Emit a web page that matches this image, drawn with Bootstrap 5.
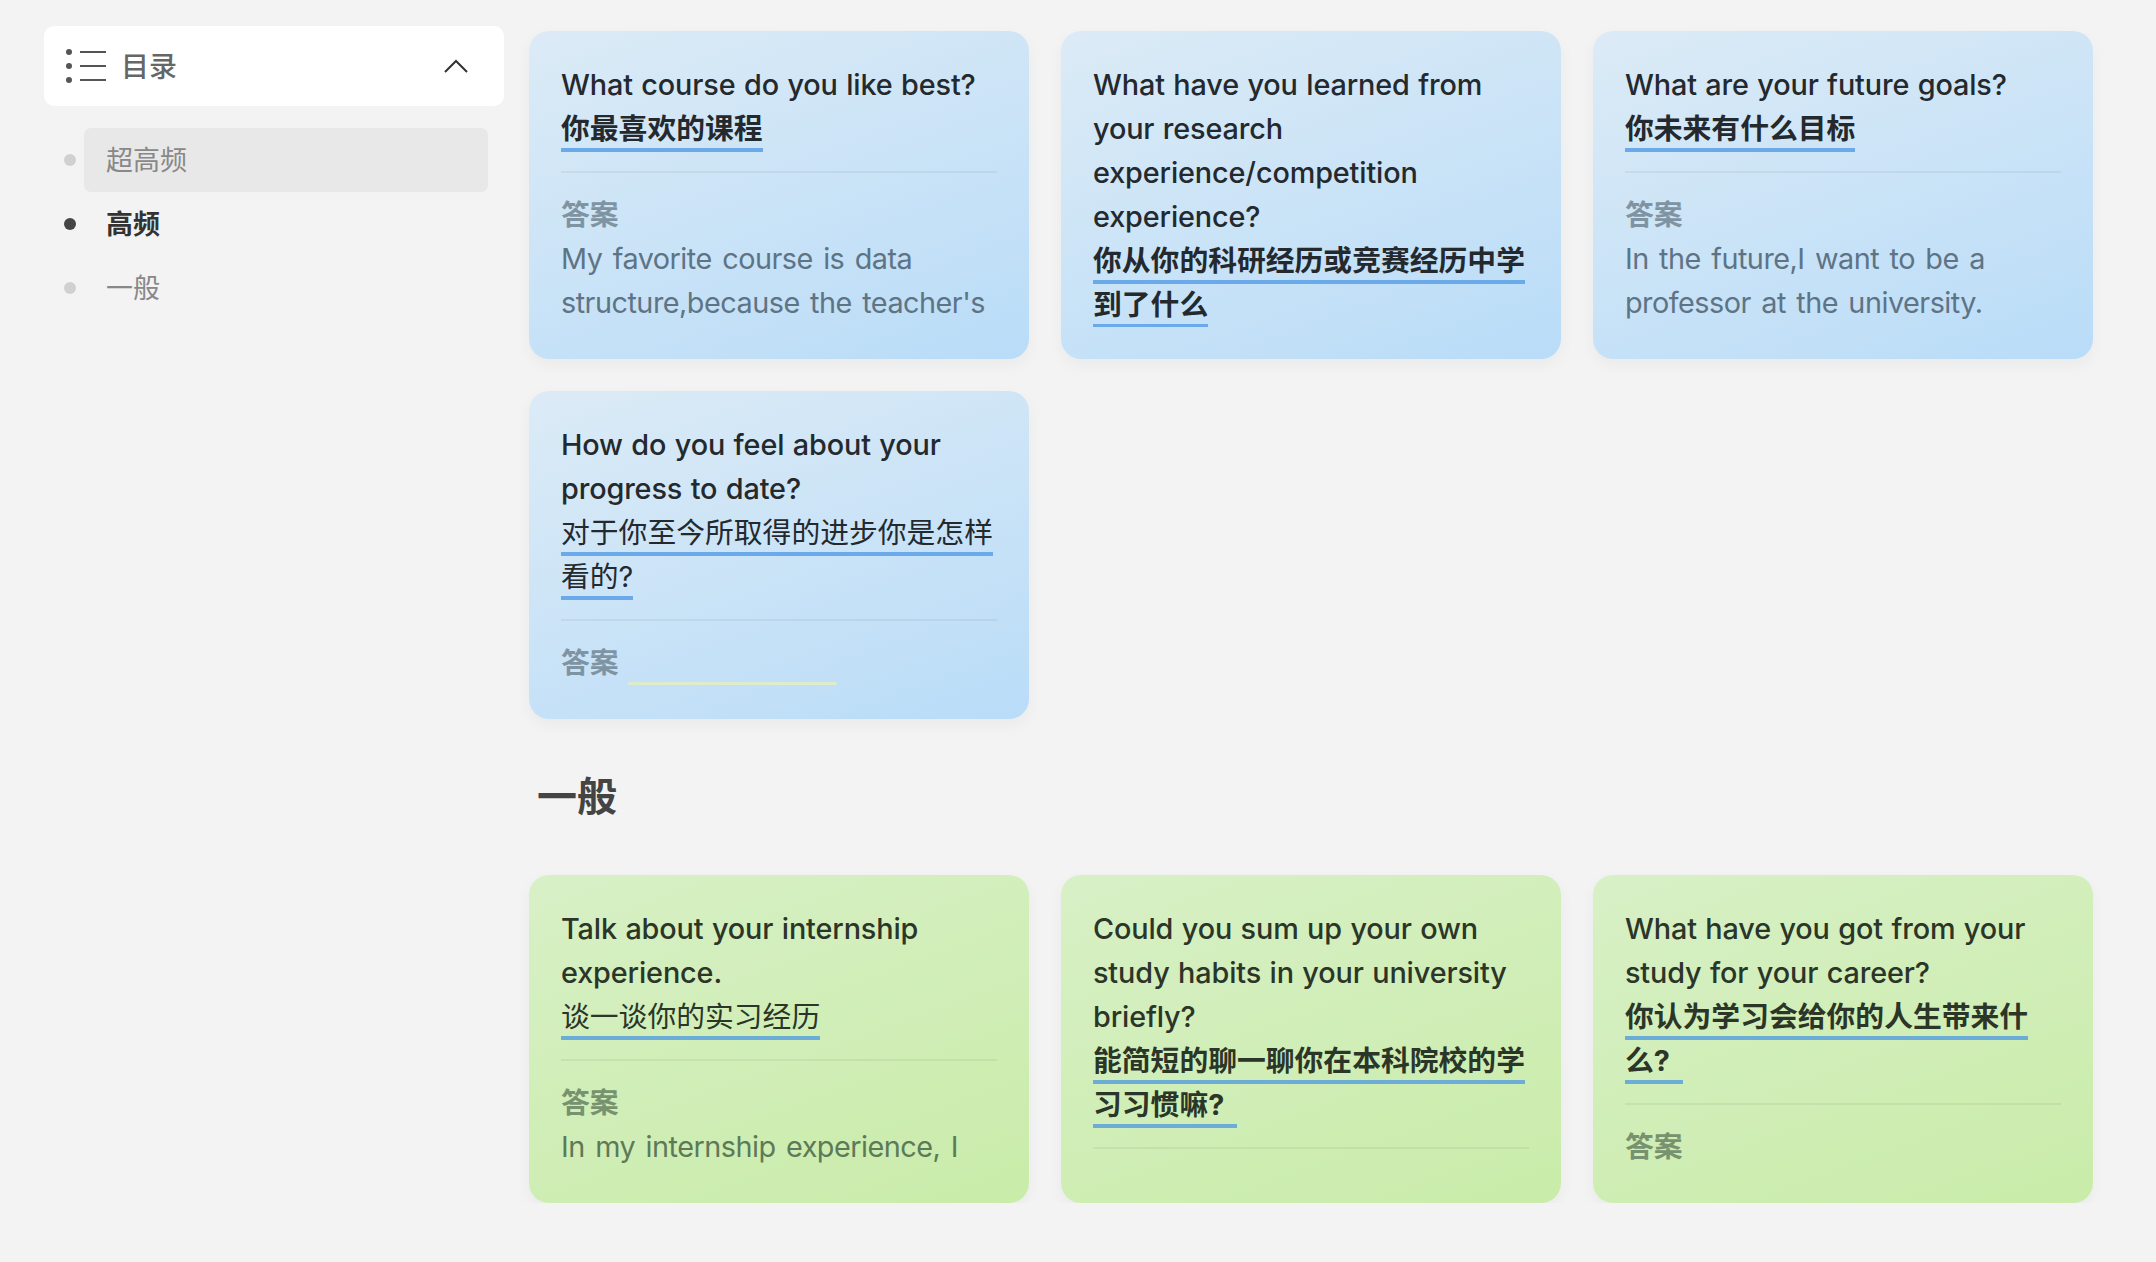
<!DOCTYPE html>
<html lang="zh-CN">
<head>
	<meta charset="UTF-8" />
	<meta name="viewport" content="width=device-width, initial-scale=1.0" />
	<title>目录</title>
	<link href="https://cdn.jsdelivr.net/npm/bootstrap@5.3.3/dist/css/bootstrap.min.css" rel="stylesheet" />
	<style>
		body {
			background-color: #f3f3f3;
			font-family: Inter, "Noto Sans CJK SC", sans-serif;
			overflow: hidden;
		}

		.page-wrap {
			padding-left: 44px;
		}

		.side-col {
			width: 460px;
			padding-top: 26px;
			flex: none;
		}

		.toc-head {
			height: 80px;
			padding: 0 36px 0 22px;
			border-radius: 10px;
			color: #666;
			font-size: 28px;
			font-weight: 500;
		}

		.toc-head-text {
			margin-left: 13px;
			padding-top: 2px;
		}

		.toc-list {
			margin-top: 22px;
		}

		.toc-item {
			height: 64px;
			padding-left: 20px;
			font-size: 27px;
			color: #888;
		}

		.toc-dot {
			width: 12px;
			height: 12px;
			border-radius: 50%;
			background-color: #d0d0d0;
			flex: none;
		}

		.toc-label {
			width: 404px;
			height: 64px;
			margin-left: 8px;
			padding: 2px 0 0 22px;
			border-radius: 7px;
		}

		.toc-item.is-hover .toc-label {
			background-color: #e8e8e8;
		}

		.toc-item.is-current {
			color: #333;
			font-weight: 700;
		}

		.toc-item.is-current .toc-dot {
			background-color: #444;
		}

		.main-col {
			width: 1564px;
			margin-left: 25px;
			padding-top: 31px;
		}

		.q-row {
			--bs-gutter-x: 32px;
			--bs-gutter-y: 32px;
		}

		.q-card {
			height: 328px;
			padding: 32px;
			border-radius: 20px;
			box-shadow: 0 6px 16px rgba(0, 0, 0, .04);
			font-size: 28.8px;
			line-height: 44px;
		}

		.q-inner {
			height: 264px;
			overflow: hidden;
		}

		.q-blue {
			background: linear-gradient(160deg, #dcebf6, #b9dcf8);
			color: #24292e;
		}

		.q-green {
			background: linear-gradient(160deg, #d8f0c6, #c9eca9);
			color: #2b3528;
		}

		.q-en {
			font-weight: 500;
			letter-spacing: -.12px;
			word-spacing: .9px;
		}

		.q-cn {
			padding-bottom: 2px;
			border-bottom: 4px solid #6aaaea;
			font-weight: 400;
		}

		.q-green .q-cn {
			border-bottom-color: #6cadd8;
		}

		.q-cn.is-bold {
			font-weight: 700;
		}

		.q-tail {
			padding-right: 13px;
		}

		.q-line {
			height: 2px;
			margin: 20px 0;
			background-color: rgba(0, 0, 0, .05);
			opacity: 1;
			border: 0;
		}

		.q-tag {
			font-weight: 700;
			color: #7f94a3;
		}

		.q-green .q-tag {
			color: #76926f;
		}

		.q-text {
			color: #5e7485;
			letter-spacing: -.5px;
			word-spacing: 2.8px;
		}

		.q-green .q-text {
			color: #5d7a58;
		}

		.q-blank {
			display: inline-block;
			width: 209px;
			height: 3px;
			margin-left: 9px;
			border-radius: 2px;
			vertical-align: -12px;
			background-color: #dfeccc;
		}

		.sec-title {
			height: 60px;
			margin: 48px 0;
			padding-left: 8px;
			font-size: 40px;
			line-height: 60px;
			font-weight: 700;
			color: #444;
		}
	</style>
</head>
<body>

	<div class="page-wrap d-flex">

		<div class="side-col">
			<div class="toc-head bg-white d-flex align-items-center">
				<svg width="42" height="36" viewBox="0 0 42 36" fill="none">
					<circle cx="3" cy="4" r="3" fill="#555" />
					<circle cx="3" cy="18" r="3" fill="#555" />
					<circle cx="3" cy="32" r="3" fill="#555" />
					<path d="M14 4H40M14 18H40M14 32H40" stroke="#555" stroke-width="2" />
				</svg>
				<span class="toc-head-text">目录</span>
				<svg class="ms-auto" width="24" height="14" viewBox="0 0 24 14" fill="none">
					<path d="M1 13L12 2L23 13" stroke="#333" stroke-width="2" />
				</svg>
			</div>
			<ul class="toc-list list-unstyled">
				<li class="toc-item is-hover d-flex align-items-center">
					<span class="toc-dot"></span><span class="toc-label d-flex align-items-center">超高频</span>
				</li>
				<li class="toc-item is-current d-flex align-items-center">
					<span class="toc-dot"></span><span class="toc-label d-flex align-items-center">高频</span>
				</li>
				<li class="toc-item d-flex align-items-center">
					<span class="toc-dot"></span><span class="toc-label d-flex align-items-center">一般</span>
				</li>
			</ul>
		</div>

		<div class="main-col">

			<div class="row row-cols-3 q-row">
				<div class="col">
					<div class="q-card q-blue"><div class="q-inner">
						<div class="q-en">What course do you like best?</div>
						<div><span class="q-cn is-bold">你最喜欢的课程</span></div>
						<hr class="q-line" />
						<div class="q-tag">答案</div>
						<div class="q-text">My favorite course is data structure,because the teacher's</div>
					</div></div>
				</div>
				<div class="col">
					<div class="q-card q-blue"><div class="q-inner">
						<div class="q-en">What have you learned from your research experience/competition experience?</div>
						<div><span class="q-cn is-bold">你从你的科研经历或竞赛经历中学到了什么</span></div>
					</div></div>
				</div>
				<div class="col">
					<div class="q-card q-blue"><div class="q-inner">
						<div class="q-en">What are your future goals?</div>
						<div><span class="q-cn is-bold">你未来有什么目标</span></div>
						<hr class="q-line" />
						<div class="q-tag">答案</div>
						<div class="q-text">In the future,I want to be a professor at the university.</div>
					</div></div>
				</div>
				<div class="col">
					<div class="q-card q-blue"><div class="q-inner">
						<div class="q-en">How do you feel about your progress to date?</div>
						<div><span class="q-cn">对于你至今所取得的进步你是怎样看的?</span></div>
						<hr class="q-line" />
						<div class="q-tag">答案<span class="q-blank"></span></div>
					</div></div>
				</div>
			</div>

			<div class="sec-title">一般</div>

			<div class="row row-cols-3 q-row">
				<div class="col">
					<div class="q-card q-green"><div class="q-inner">
						<div class="q-en">Talk about your internship experience.</div>
						<div><span class="q-cn">谈一谈你的实习经历</span></div>
						<hr class="q-line" />
						<div class="q-tag">答案</div>
						<div class="q-text">In my internship experience, I</div>
					</div></div>
				</div>
				<div class="col">
					<div class="q-card q-green"><div class="q-inner">
						<div class="q-en">Could you sum up your own study habits in your university briefly?</div>
						<div><span class="q-cn is-bold">能简短的聊一聊你在本科院校的学习习惯嘛?<span class="q-tail"></span></span></div>
						<hr class="q-line" />
					</div></div>
				</div>
				<div class="col">
					<div class="q-card q-green"><div class="q-inner">
						<div class="q-en">What have you got from your study for your career?</div>
						<div><span class="q-cn is-bold">你认为学习会给你的人生带来什么?<span class="q-tail"></span></span></div>
						<hr class="q-line" />
						<div class="q-tag">答案</div>
					</div></div>
				</div>
			</div>

		</div>
	</div>

	<script src="https://cdn.jsdelivr.net/npm/bootstrap@5.3.3/dist/js/bootstrap.bundle.min.js"></script>
</body>
</html>
